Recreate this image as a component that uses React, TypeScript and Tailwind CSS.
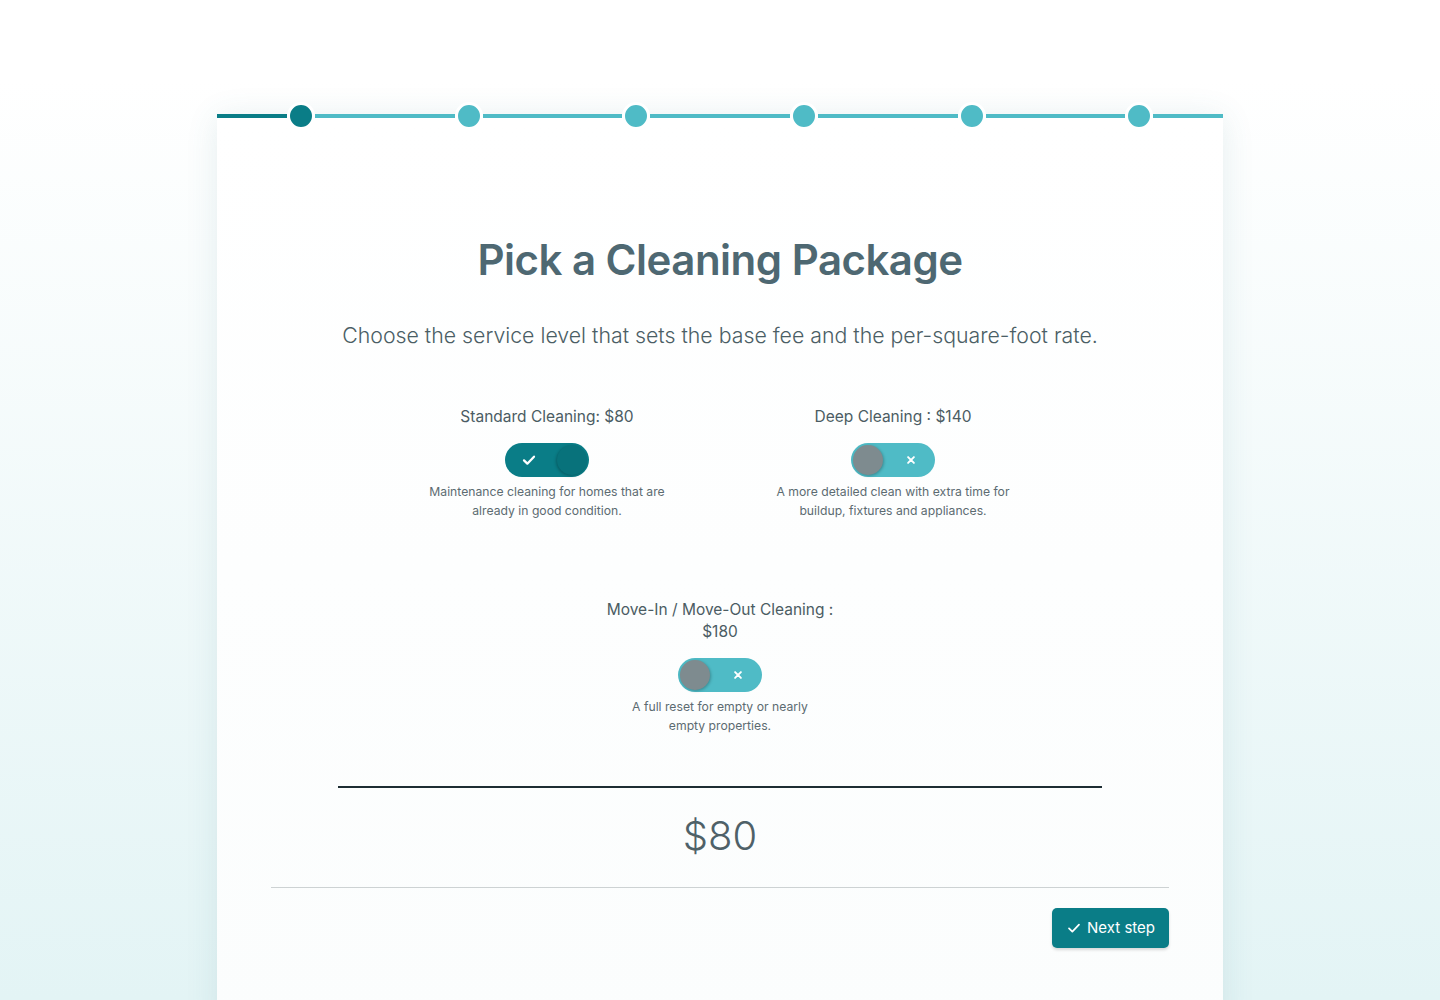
import React from 'react'

function Check({ className, width = 3 }: { className?: string; width?: number }) {
  return (
    <svg viewBox="0 0 24 24" className={className} fill="none" stroke="currentColor" strokeWidth={width} strokeLinecap="round" strokeLinejoin="round">
      <path d="M4.5 12.5l5 5L19.5 7" />
    </svg>
  )
}

function Cross({ className }: { className?: string }) {
  return (
    <svg viewBox="0 0 24 24" className={className} fill="none" stroke="currentColor" strokeWidth={4.5} strokeLinecap="round">
      <path d="M5 5l14 14M19 5L5 19" />
    </svg>
  )
}

function Toggle({ on }: { on: boolean }) {
  if (on) {
    return (
      <div className="relative flex h-[34px] w-[84px] items-center rounded-full bg-[#0a7d87]">
        <Check className="ml-[16px] h-[16px] w-[16px] text-white" width={3.4} />
        <div className="absolute right-[2px] top-[2px] h-[30px] w-[30px] rounded-full bg-[#08727b] shadow-[-1px_1px_3px_rgba(0,0,0,0.25)]" />
      </div>
    )
  }
  return (
    <div className="relative flex h-[34px] w-[84px] items-center justify-end rounded-full bg-[#4fbbc6]">
      <div className="absolute left-[2px] top-[2px] h-[30px] w-[30px] rounded-full bg-[#7e8b8f] shadow-[1px_1px_3px_rgba(0,0,0,0.25)]" />
      <Cross className="mr-[19px] h-[10px] w-[10px] text-white" />
    </div>
  )
}

function Option({ label, desc, on }: { label: React.ReactNode; desc: React.ReactNode; on: boolean }) {
  return (
    <div className="flex flex-col items-center text-center">
      <div className="text-[15.5px] leading-[22px] text-[#4b5c63]">{label}</div>
      <div className="mt-[15px]">
        <Toggle on={on} />
      </div>
      <div className="mt-[6px] text-[12.2px] leading-[18.5px] text-[#5c6b71]">{desc}</div>
    </div>
  )
}

function Stepper() {
  const steps = [0, 1, 2, 3, 4, 5]
  return (
    <div className="-mt-[13px] flex h-[24px] w-full">
      {steps.map((i) => {
        const active = i === 0
        return (
          <div key={i} className="flex flex-1 items-center">
            <div className={`h-[4px] flex-1 ${active ? 'bg-[#0a7d87]' : 'bg-[#4fbbc6]'}`} />
            <div className={`h-[28px] w-[28px] shrink-0 rounded-full border-[3px] border-white ${active ? 'bg-[#0a7d87]' : 'bg-[#4fbbc6]'}`} />
            <div className="h-[4px] flex-1 bg-[#4fbbc6]" />
          </div>
        )
      })}
    </div>
  )
}

export default function App() {
  return (
    <div
      className="h-[1000px] w-full overflow-hidden bg-gradient-to-b from-white from-[8%] to-[#e3f4f5]"
      style={{ fontFamily: 'Inter, "Noto Sans", sans-serif' }}
    >
      <div className="mx-auto mt-[117px] flow-root w-[1006px] bg-gradient-to-b from-white to-[#fbfdfd] pb-[80px] shadow-[0_0_30px_rgba(60,120,130,0.12)]">
        <Stepper />
        <div className="flex flex-col items-center pt-[105px]">
          <h1 className="text-[42px] font-semibold leading-[53px] tracking-[-0.5px] text-[#4e6872]">
            Pick a Cleaning Package
          </h1>
          <p className="mt-[34px] text-[21.3px] font-light leading-[30px] text-[#4b5e65]">
            Choose the service level that sets the base fee and the per-square-foot rate.
          </p>

          <div className="mt-[56px] grid w-[692px] grid-cols-2">
            <Option
              on
              label="Standard Cleaning: $80"
              desc={<>Maintenance cleaning for homes that are<br />already in good condition.</>}
            />
            <Option
              on={false}
              label="Deep Cleaning : $140"
              desc={<>A more detailed clean with extra time for<br />buildup, fixtures and appliances.</>}
            />
          </div>

          <div className="mt-[79px]">
            <Option
              on={false}
              label={<>Move-In / Move-Out Cleaning :<br />$180</>}
              desc={<>A full reset for empty or nearly<br />empty properties.</>}
            />
          </div>

          <div className="mt-[51px] h-[2px] w-[764px] bg-[#1d2d33]" />
          <div className="mt-[24px] text-[40px] font-light leading-[48px] text-[#4f6168]">$80</div>
          <div className="mt-[27px] h-px w-[898px] bg-[#cdd2d3]" />
          <div className="mt-[20px] flex w-[898px] justify-end">
            <button
              type="button"
              className="flex h-[40px] items-center gap-[5px] rounded-[5px] bg-[#0a7d87] px-[14px] text-[15px] text-white shadow-[0_2px_3px_rgba(0,0,0,0.15)]"
            >
              <Check className="h-[16px] w-[16px]" width={2.6} />
              Next step
            </button>
          </div>
        </div>
      </div>
    </div>
  )
}
